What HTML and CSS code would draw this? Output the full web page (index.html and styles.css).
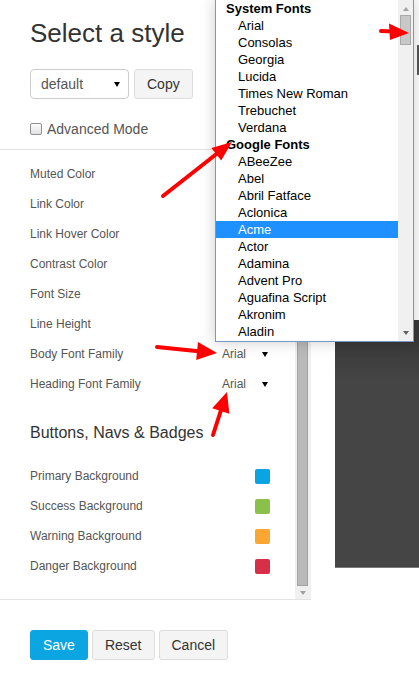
FILE: index.html
```html
<!DOCTYPE html>
<html lang="en">
<head>
<meta charset="utf-8">
<title>Select a style</title>
<link rel="stylesheet" href="styles.css">
</head>
<body>
<div class="app">
  <aside class="panel">
    <header class="panel-head">
      <h1 class="title">Select a style</h1>
      <div class="style-row">
        <div class="select"><span>default</span><span class="caret"></span></div>
        <button class="btn">Copy</button>
      </div>
      <label class="adv"><input type="checkbox" class="check"><span>Advanced Mode</span></label>
    </header>
    <div class="scroll">
      <div class="fields">
        <div class="field"><span>Muted Color</span></div>
        <div class="field"><span>Link Color</span></div>
        <div class="field"><span>Link Hover Color</span></div>
        <div class="field"><span>Contrast Color</span></div>
        <div class="field"><span>Font Size</span></div>
        <div class="field"><span>Line Height</span></div>
        <div class="field"><span>Body Font Family</span><div class="font-select"><span>Arial</span><span class="caret"></span></div></div>
        <div class="field"><span>Heading Font Family</span><div class="font-select"><span>Arial</span><span class="caret"></span></div></div>
        <h2 class="section">Buttons, Navs &amp; Badges</h2>
        <div class="field"><span>Primary Background</span><span class="swatch sw-primary"></span></div>
        <div class="field"><span>Success Background</span><span class="swatch sw-success"></span></div>
        <div class="field"><span>Warning Background</span><span class="swatch sw-warning"></span></div>
        <div class="field"><span>Danger Background</span><span class="swatch sw-danger"></span></div>
      </div>
      <div class="vscroll">
        <div class="vs-thumb"></div>
        <div class="vs-down"><span class="tri-down"></span></div>
      </div>
    </div>
    <footer class="panel-foot">
      <button class="btn btn-primary">Save</button>
      <button class="btn">Reset</button>
      <button class="btn">Cancel</button>
    </footer>
  </aside>
  <main class="preview">
    <div class="edge-bar"></div>
    <div class="dark-box"></div>
  </main>
</div>

<div class="dropdown">
  <ul class="dd-list">
    <li class="dd-group">System Fonts</li>
    <li class="dd-opt">Arial</li>
    <li class="dd-opt">Consolas</li>
    <li class="dd-opt">Georgia</li>
    <li class="dd-opt">Lucida</li>
    <li class="dd-opt">Times New Roman</li>
    <li class="dd-opt">Trebuchet</li>
    <li class="dd-opt">Verdana</li>
    <li class="dd-group">Google Fonts</li>
    <li class="dd-opt">ABeeZee</li>
    <li class="dd-opt">Abel</li>
    <li class="dd-opt">Abril Fatface</li>
    <li class="dd-opt">Aclonica</li>
    <li class="dd-opt dd-active">Acme</li>
    <li class="dd-opt">Actor</li>
    <li class="dd-opt">Adamina</li>
    <li class="dd-opt">Advent Pro</li>
    <li class="dd-opt">Aguafina Script</li>
    <li class="dd-opt">Akronim</li>
    <li class="dd-opt">Aladin</li>
  </ul>
  <div class="dd-scroll">
    <span class="dd-up"></span>
    <span class="dd-thumb"></span>
    <span class="dd-down"></span>
  </div>
</div>

<svg class="notes" width="419" height="682" viewBox="0 0 419 682" aria-hidden="true">
  <g stroke="#ff0000" stroke-width="4" stroke-linecap="round" fill="none">
    <line x1="381" y1="31" x2="393" y2="31.6"/>
    <line x1="163" y1="196" x2="219" y2="152"/>
    <line x1="157" y1="347" x2="201" y2="351.4"/>
    <line x1="213" y1="435" x2="222" y2="407"/>
  </g>
  <g fill="#ff0000">
    <polygon points="409,33 389,23.5 390,40"/>
    <polygon points="232,142 211.4,148 221.2,160.6"/>
    <polygon points="217,353 198,342 196.2,360"/>
    <polygon points="227,392 229.4,413.8 212.2,408.2"/>
  </g>
</svg>
</body>
</html>
```

FILE: styles.css
```css
* { box-sizing: border-box; }

html, body { margin: 0; padding: 0; }

body {
  width: 419px;
  height: 682px;
  overflow: hidden;
  position: relative;
  background: #fff;
  font-family: "Liberation Sans", Arial, sans-serif;
}

.app {
  display: flex;
  height: 682px;
}

/* ---------- left panel ---------- */
.panel {
  width: 311px;
  flex: none;
  display: flex;
  flex-direction: column;
}

.panel-head {
  height: 150px;
  flex: none;
  border-bottom: 1px solid #e3e3e3;
  padding: 18px 0 0 30px;
}

.title {
  margin: 0;
  font-size: 26px;
  line-height: 30px;
  font-weight: normal;
  color: #333;
}

.style-row {
  display: flex;
  gap: 5px;
  margin-top: 21px;
}

.select {
  width: 99px;
  height: 30px;
  border: 1px solid #ccc;
  border-radius: 4px;
  display: flex;
  align-items: center;
  justify-content: space-between;
  padding: 0 8px 0 10px;
  font-size: 14px;
  color: #555;
  background: #fff;
}

.caret {
  width: 0;
  height: 0;
  border-left: 3px solid transparent;
  border-right: 3px solid transparent;
  border-top: 5px solid #000;
}

.btn {
  height: 30px;
  padding: 0 12px;
  border: 1px solid #ddd;
  border-radius: 3px;
  background: #f4f4f4;
  font-family: inherit;
  font-size: 14px;
  color: #333;
}

.btn-primary {
  background: #0ba5e2;
  border-color: #0ba5e2;
  color: #fff;
}

.adv {
  display: flex;
  align-items: center;
  gap: 5px;
  height: 20px;
  margin-top: 20px;
  font-size: 14px;
  color: #555;
}

.check {
  -webkit-appearance: none;
  appearance: none;
  margin: 0;
  width: 12px;
  height: 12px;
  border: 1px solid #8e8e8e;
  border-radius: 2px;
  background: linear-gradient(#fcfcfc, #e2e2e2);
}

.scroll {
  height: 450px;
  flex: none;
  display: flex;
  border-bottom: 1px solid #e3e3e3;
}

.fields {
  flex: 1;
  padding: 9px 25px 0 30px;
}

.field {
  height: 30px;
  display: flex;
  align-items: center;
  justify-content: space-between;
  font-size: 12px;
  color: #555;
}

.section {
  margin: 24px 0 18px;
  font-size: 16px;
  line-height: 20px;
  font-weight: normal;
  color: #333;
}

.font-select {
  width: 48px;
  display: flex;
  align-items: center;
  justify-content: space-between;
  padding-right: 2px;
  color: #555;
}

.swatch {
  width: 15px;
  height: 15px;
  border-radius: 2px;
}
.sw-primary { background: #0aa4e3; }
.sw-success { background: #8bc14b; }
.sw-warning { background: #f9a633; }
.sw-danger  { background: #d82f48; }

.vscroll {
  width: 16px;
  flex: none;
  background: #f0f0f0;
  display: flex;
  flex-direction: column;
  padding-left: 2px;
}

.vs-thumb {
  flex: 1;
  width: 11px;
  margin-top: 15px;
  background: #b9b9b9;
  border: 1px solid #a3a3a3;
}

.vs-down {
  height: 13px;
  width: 11px;
  display: flex;
  align-items: center;
  justify-content: center;
}

.tri-down {
  width: 0;
  height: 0;
  border-left: 3px solid transparent;
  border-right: 3px solid transparent;
  border-top: 4px solid #a0a0a0;
}

.panel-foot {
  flex: 1;
  display: flex;
  align-items: flex-start;
  gap: 4px;
  padding: 30px 0 0 30px;
}

/* ---------- preview ---------- */
.preview {
  flex: 1;
  display: flex;
  flex-direction: column;
}

.edge-bar {
  align-self: flex-end;
  width: 2px;
  height: 30px;
  margin-top: 45px;
  background: #555;
}

.dark-box {
  margin: 245px 0 0 24px;
  height: 248px;
  background: linear-gradient(#393939 0, #393939 22px, #454545 60px, #454545 100%);
  border-bottom: 1px solid #7a7a7a;
}

/* ---------- open dropdown ---------- */
.dropdown {
  position: absolute;
  left: 215px;
  top: -1px;
  width: 199px;
  height: 343px;
  border: 1px solid #7d96c6;
  background: #fff;
  display: flex;
  box-shadow: 0 0 14px rgba(0, 0, 0, 0.2);
  overflow: hidden;
}

.dd-list {
  width: 182px;
  flex: none;
  list-style: none;
  margin: 0;
  padding: 0;
  font-size: 13px;
  line-height: 17px;
  color: #000;
}

.dd-list li {
  height: 17px;
  white-space: nowrap;
}

.dd-group {
  font-weight: bold;
  padding-left: 10px;
}

.dd-opt {
  padding-left: 22px;
}

.dd-active {
  background: #1e90ff;
  color: #fff;
}

.dd-scroll {
  width: 15px;
  flex: none;
  background: #f0f0f0;
  display: flex;
  flex-direction: column;
  align-items: center;
}

.dd-up {
  margin-top: 7px;
  width: 0;
  height: 0;
  border-left: 3.5px solid transparent;
  border-right: 3.5px solid transparent;
  border-bottom: 4px solid #a3a3a3;
}

.dd-thumb {
  margin-top: 4px;
  width: 11px;
  height: 30px;
  background: #c8c8c8;
  border: 1px solid #a9a9a9;
}

.dd-down {
  margin-top: auto;
  margin-bottom: 6px;
  width: 0;
  height: 0;
  border-left: 3.5px solid transparent;
  border-right: 3.5px solid transparent;
  border-top: 4px solid #606060;
}

/* ---------- annotation arrows ---------- */
.notes {
  position: absolute;
  left: 0;
  top: 0;
  pointer-events: none;
}
```
